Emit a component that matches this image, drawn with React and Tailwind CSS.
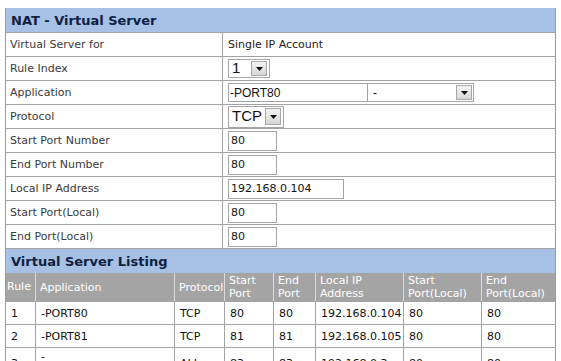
import React from "react";

function Arrow({ className = "" }) {
  return (
    <div className={"flex items-center justify-center border border-[#a7a7a7] bg-gradient-to-b from-[#f4f4f4] to-[#d6d6d6] " + className}>
      <svg width="7" height="4" viewBox="0 0 7 4"><path d="M0 0h7L3.5 4z" fill="#111" /></svg>
    </div>
  );
}

function Row({ label, children }) {
  return (
    <div className="grid grid-cols-[217px_1fr] h-[24px] border-b border-[#a3a3a3] bg-white">
      <div className="border-r border-[#a3a3a3] pl-[4px] pt-[2px] flex items-center text-[11px] text-[#3a3a3a]">{label}</div>
      <div className="flex items-center pl-[5px] text-[11px] text-[#222]">{children}</div>
    </div>
  );
}

function TextBox({ w, children }) {
  return (
    <div className={"h-[20px] border border-[#a5a5a5] bg-white flex items-center pl-[2px] pt-[1px] text-[11px] text-[#111] " + w}>{children}</div>
  );
}

const cols = "grid grid-cols-[30px_139px_50px_49px_42px_88px_78px_1fr]";

function HeadCell({ children, last }) {
  return (
    <div className={"flex items-center pl-[4px] text-[11px] leading-[13px] text-white " + (last ? "" : "border-r border-[#dcdcdc]")}>{children}</div>
  );
}

function Cell({ children, last }) {
  return (
    <div className={"flex items-center pl-[5px] pt-[2px] text-[11px] text-[#111] " + (last ? "" : "border-r border-[#a3a3a3]")}>{children}</div>
  );
}

const data = [
  ["1", "-PORT80", "TCP", "80", "80", "192.168.0.104", "80", "80"],
  ["2", "-PORT81", "TCP", "81", "81", "192.168.0.105", "80", "80"],
];

export default function App() {
  return (
    <div className="w-[561px] h-[361px] overflow-hidden bg-white pt-[8px] pl-[5px] font-['DejaVu_Sans',Verdana,sans-serif]">
      <div className="w-[551px] border-x border-[#9c9c9c]">
        <div className="h-[25px] bg-[#a6c1e3] border-b border-[#a3a3a3] flex items-center pl-[5px] pt-[1px] text-[13px] font-bold text-[#10203f]">
          NAT - Virtual Server
        </div>
        <Row label="Virtual Server for"><span className="pt-[2px]">Single IP Account</span></Row>
        <Row label="Rule Index">
          <div className="h-[19px] w-[42px] border border-[#a5a5a5] bg-white flex items-center justify-between pl-[3px] pr-[2px] text-[15px] text-[#111] font-['Liberation_Sans',Arial,sans-serif]">
            1<Arrow className="w-[16px] h-[15px]" />
          </div>
        </Row>
        <Row label="Application">
          <div className="flex">
            <div className="h-[19px] w-[140px] border border-[#a5a5a5] bg-white flex items-center pl-[1px] text-[12px] text-[#111] font-['Liberation_Sans',Arial,sans-serif]">-PORT80</div>
            <div className="h-[19px] w-[106px] border border-l-0 border-[#a5a5a5] bg-white flex items-center justify-between pl-[5px] pr-[1px] text-[12px] text-[#111] font-['Liberation_Sans',Arial,sans-serif]">
              -<Arrow className="w-[16px] h-[15px]" />
            </div>
          </div>
        </Row>
        <Row label="Protocol">
          <div className="h-[22px] w-[56px] border border-[#a5a5a5] bg-white flex items-center justify-between pl-[3px] pr-[2px] text-[15px] text-[#111] font-['Liberation_Sans',Arial,sans-serif]">
            TCP<Arrow className="w-[16px] h-[17px]" />
          </div>
        </Row>
        <Row label="Start Port Number"><TextBox w="w-[49px]">80</TextBox></Row>
        <Row label="End Port Number"><TextBox w="w-[49px]">80</TextBox></Row>
        <Row label="Local IP Address"><TextBox w="w-[116px]">192.168.0.104</TextBox></Row>
        <Row label="Start Port(Local)"><TextBox w="w-[49px]">80</TextBox></Row>
        <Row label="End Port(Local)"><TextBox w="w-[49px]">80</TextBox></Row>

        <div className="h-[24px] bg-[#a6c1e3] flex items-center pl-[5px] pt-[1px] text-[13px] font-bold text-[#10203f]">
          Virtual Server Listing
        </div>
        <div className={cols + " h-[29px] bg-[#a4a4a4] border-b border-[#a3a3a3]"}>
          <div className="flex items-center pl-[1px] text-[11px] text-white border-r border-[#dcdcdc]">Rule</div>
          <HeadCell>Application</HeadCell>
          <HeadCell>Protocol</HeadCell>
          <HeadCell><span>Start<br />Port</span></HeadCell>
          <HeadCell><span>End<br />Port</span></HeadCell>
          <HeadCell><span>Local IP<br />Address</span></HeadCell>
          <HeadCell><span>Start<br />Port(Local)</span></HeadCell>
          <HeadCell last><span>End<br />Port(Local)</span></HeadCell>
        </div>
        {data.map((r, i) => (
          <div key={i} className={cols + " h-[23px] border-b border-[#a3a3a3]"}>
            {r.map((c, j) => (
              <Cell key={j} last={j === 7}>{c}</Cell>
            ))}
          </div>
        ))}
        <div className={cols + " h-[30px]"}>
          <Cell>3</Cell>
          <div className="pl-[5px] pt-[1px] text-[11px] text-[#111] border-r border-[#a3a3a3]">-</div>
          <Cell>ALL</Cell>
          <Cell>83</Cell>
          <Cell>83</Cell>
          <Cell>192.168.0.3</Cell>
          <Cell>80</Cell>
          <Cell last>80</Cell>
        </div>
      </div>
    </div>
  );
}
